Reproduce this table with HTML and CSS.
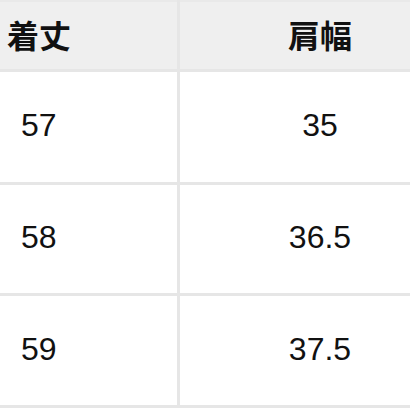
FILE: index.html
```html
<!DOCTYPE html>
<html lang="ja">
<head>
<meta charset="utf-8">
<link rel="stylesheet" href="styles.css">
</head>
<body>
<div class="table">
  <div class="cell head c1 h0">着丈</div>
  <div class="cell head c2 h0">肩幅</div>
  <div class="cell num c1 r1">57</div>
  <div class="cell num c2 r1">35</div>
  <div class="cell num c1 r2">58</div>
  <div class="cell num c2 r2">36.5</div>
  <div class="cell num c1 r3">59</div>
  <div class="cell num c2 r3">37.5</div>
</div>
</body>
</html>
```
FILE: styles.css
```css
html, body {
  margin: 0;
  padding: 0;
  background: #ffffff;
  width: 410px;
  height: 410px;
  overflow: hidden;
}
.table {
  display: grid;
  grid-template-columns: 177px 1fr;
  grid-template-rows: 69px 110px 108px 109px;
  column-gap: 3px;
  row-gap: 3px;
  background: #e6e6e6;
  border-bottom: 3px solid #e6e6e6;
  font-family: "Noto Sans CJK JP", "Noto Sans", sans-serif;
  color: #111111;
}
.cell {
  display: flex;
  align-items: center;
  background: #ffffff;
}
.head {
  background: #efefef;
  font-weight: 700;
  font-size: 32px;
  border-top: 2px solid #e9e9e9;
  padding-bottom: 4px;
}
.num {
  font-family: "Liberation Sans", "Noto Sans CJK JP", sans-serif;
  font-size: 32px;
  font-weight: 400;
  line-height: 1;
  padding-bottom: 4px;
}
.c1.head {
  padding-left: 7px;
}
.c1.num {
  padding-left: 21px;
}
.c2 {
  justify-content: center;
  padding-left: 50px;
}
```
